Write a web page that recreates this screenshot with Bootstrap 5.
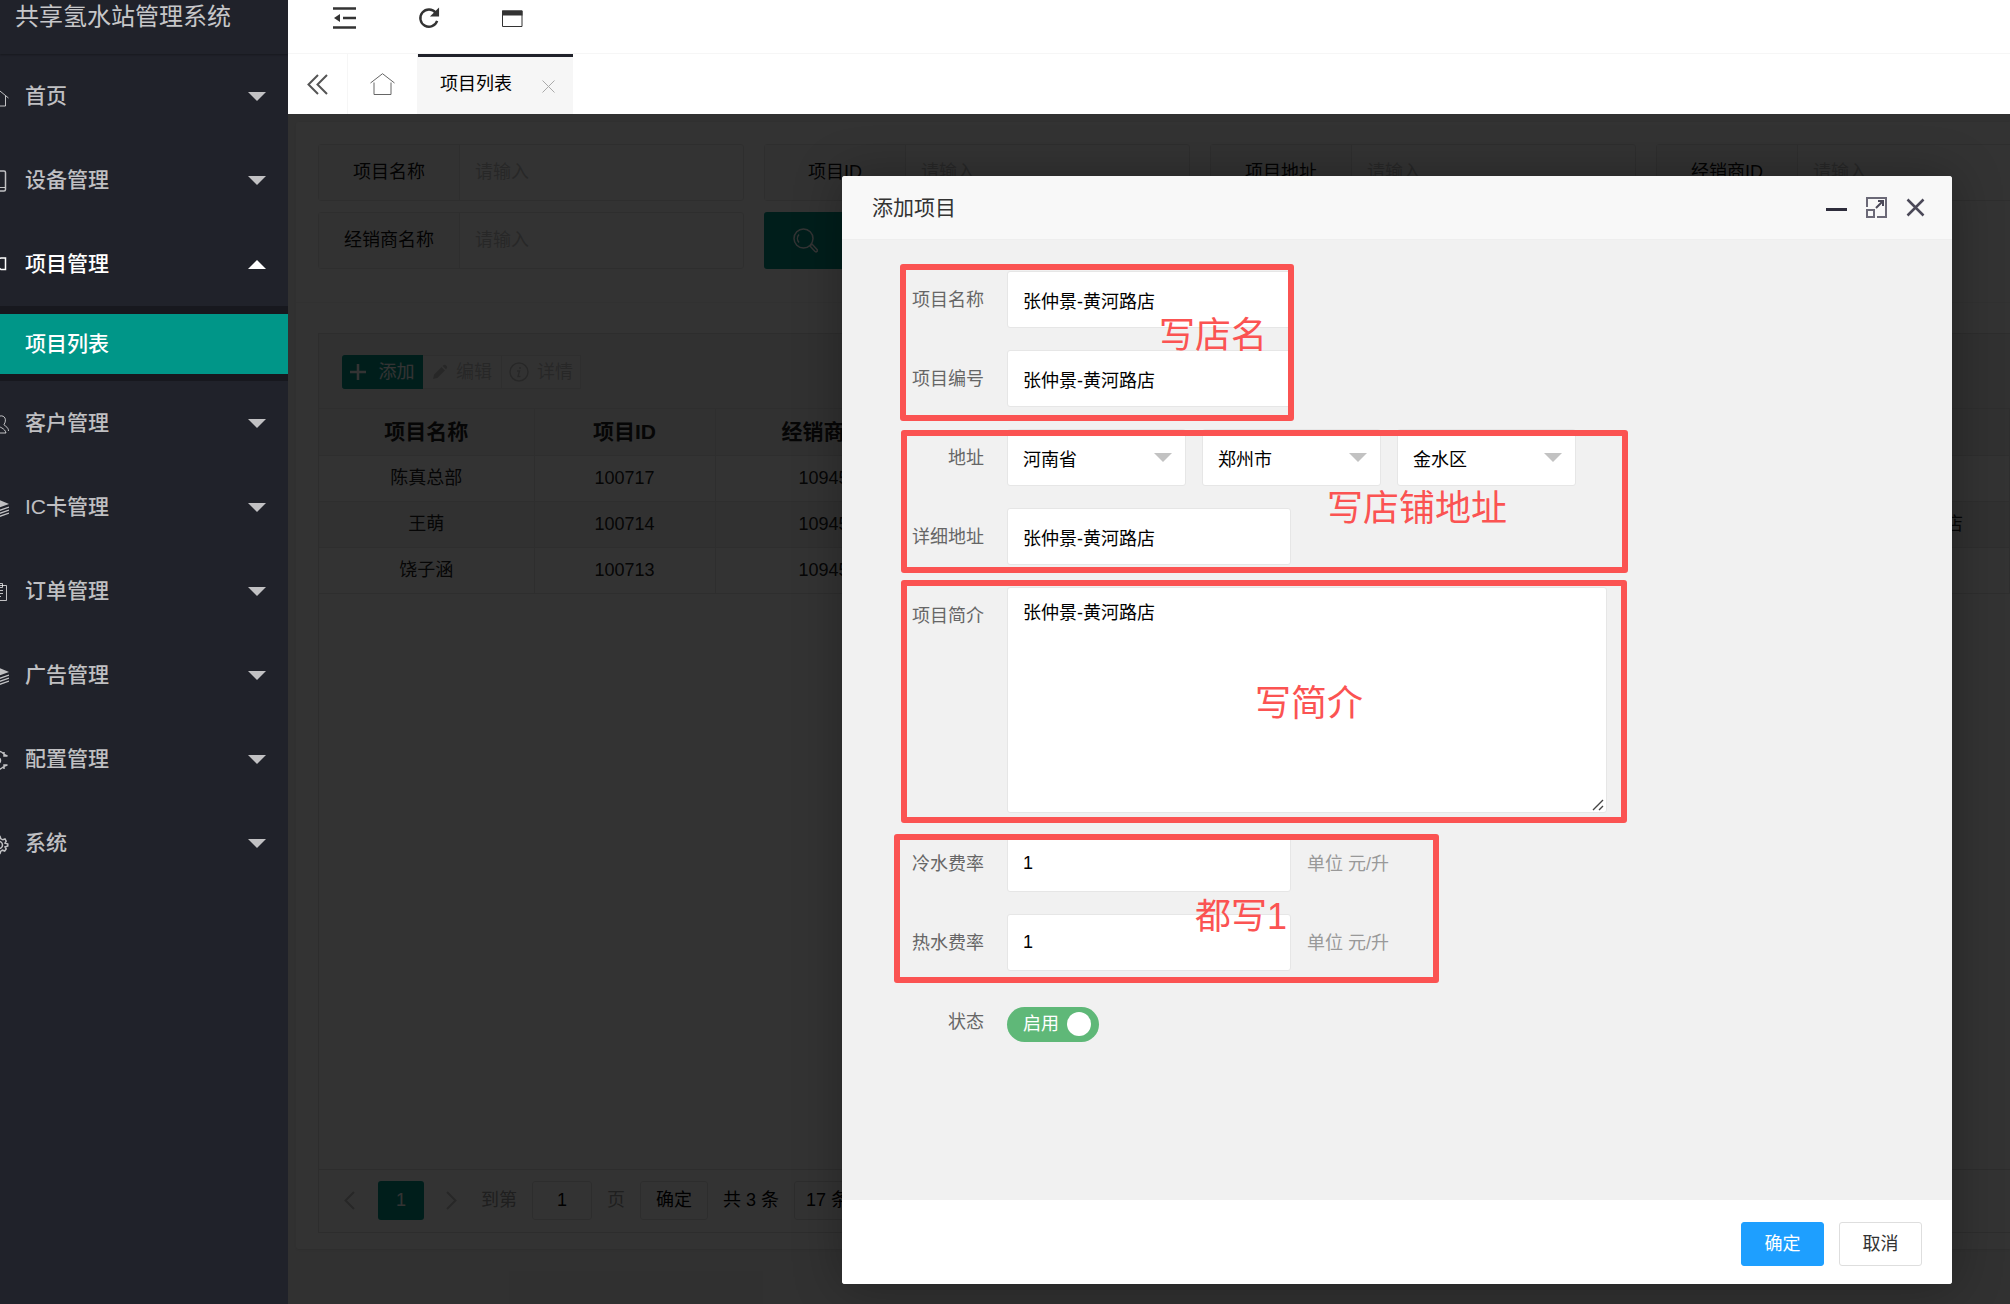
<!DOCTYPE html>
<html lang="zh-CN">
<head>
<meta charset="utf-8">
<meta name="viewport" content="width=device-width, initial-scale=1">
<title>共享氢水站管理系统</title>
<link href="https://cdn.jsdelivr.net/npm/bootstrap@5.3.0/dist/css/bootstrap.min.css" rel="stylesheet">
<style>
body{font-family:"Liberation Sans","Noto Sans CJK SC",sans-serif;font-size:18px;line-height:24px;color:#333;background:#f2f2f2}
button,input,select,textarea{font-family:inherit}
svg{display:block;flex:none}
.shell{height:100vh;min-height:1304px;overflow:hidden}
.content-col{min-width:0}
/* sidebar */
.side{width:288px;background:#20222a;overflow:hidden}
.side-logo{height:54px;padding:0 0 20px 15px;font-size:24px;color:rgba(255,255,255,.75);box-shadow:0 1px 2px rgba(0,0,0,.3)}
.side-link{height:84px;padding-right:22px;font-size:21px;font-weight:500;color:rgba(255,255,255,.72);text-decoration:none;gap:16px}
.side-link svg.ico{margin-left:-15px}
.side-link.on{color:#fff}
.side-link .arrow{margin-left:auto}
.side-sub{background:#17181e;padding:8px 0 7px}
.side-sub a{height:60px;padding-left:25px;background:#009688;color:#fff;font-size:21px;font-weight:500;text-decoration:none}
/* top bars */
.topbar{height:54px;padding:0 0 17px 45px;gap:62px;border-bottom:1px solid #f6f6f6;background:#fff}
.topbar button,.tabs-bar button,.win-tools button{border:0;background:none;padding:0;color:inherit}
.tabs-bar{height:60px;background:#fff}
.tabs-bar .cell{width:60px;border-right:1px solid #f6f6f6}
.tabs-bar .cell-lg{width:70px}
.tab-on{width:155px;background:#f6f6f6;border-top:3px solid #20222a;color:#000;padding:0 18px 3px 22px}
.tab-on a{color:#000;text-decoration:none}
.tab-on button{padding-top:4px}
/* page */
.page-area{padding:8px 0 55px 8px;background:#f2f2f2}
.panel{background:#fff;border-radius:3px 0 0 3px;box-shadow:0 1px 2px rgba(0,0,0,.08)}
.query{padding:22px 0 33px 22px;gap:11px;border-bottom:1px solid #f6f6f6}
.query-row{gap:20px}
.q-field{flex:0 0 426px;height:57px;border:1px solid #e6e6e6;border-radius:3px}
.q-field label{width:141px;padding-bottom:2px;border-right:1px solid #e6e6e6;background:#fbfbfb;color:#111}
.q-field input{min-width:0;border:0;background:none;padding:0 15px 2px}
.q-field input::placeholder{color:#c4c4c4}
.q-btn{width:83px;height:57px;border:0;border-radius:3px;background:#009688;color:#fff}
.grid-wrap{padding:30px 0 16px 22px}
.grid-box{border:1px solid #e2e2e2;border-right:0}
.grid-tools{height:75px;padding:21px 23px;background:#f2f2f2;border-bottom:1px solid #e6e6e6}
.grid-tools button{height:34px;font-size:18px;border:1px solid #e6e6e6;border-left:0;background:#fbfbfb;color:#c4c4c4;padding:0 6px;gap:8px;width:79px}
.grid-tools button.add{width:81px;background:#009688;border-color:#009688;color:#fff;border-radius:3px 0 0 3px;gap:13px}
.data-grid{table-layout:fixed;width:100%;border-collapse:collapse;color:#222}
.data-grid .c-name{width:215px}
.data-grid .c-id{width:181px}
.data-grid .c-agent{width:217px}
.data-grid th,.data-grid td{height:46px;border:0 solid #e6e6e6;border-width:0 1px 1px 0;text-align:center;padding:0}
.data-grid th{font-size:21px;background:#f2f2f2;color:#222}
.data-grid .even td{background:#f2f2f2}
.data-grid .far{text-align:right;padding-right:46px}
.pager{height:63px;border-top:1px solid #e2e2e2;padding:0 0 2px 25px;color:#000}
.pager button,.pager input,.pager select{height:39px;border:1px solid #e2e2e2;border-radius:3px;background:#fff;color:#000;padding:0;text-align:center}
.pager .nav-arrow{border:0;color:#c0c0c0;width:11px}
.pager .cur{width:46px;background:#009688;color:#fff;border:0;margin:0 22px 0 23px}
.pager .soft{color:#999}
.pager .jump{gap:15px;margin-left:24px}
.pager .jump input{width:60px}
.pager .jump button{width:68px}
.pager .jump select{width:120px;padding-left:7px;text-align:left}
/* dialog */
.shade{position:absolute;inset:0;background:rgba(0,0,0,.8);padding:62px 58px 20px 24px}
.dlg{position:relative;width:100%;max-width:1110px;background:#f1f1f1;border-radius:3px;box-shadow:1px 1px 50px rgba(0,0,0,.3)}
.dlg-head{height:64px;padding:0 27px 0 30px;font-size:21px;background:#f8f8f8;border-bottom:1px solid #eee;border-radius:3px 3px 0 0}
.win-tools{gap:19px;color:#2e2d3c}
.dlg-body{padding:31px 32px 0 32px;gap:22px}
.f-label{width:110px;margin-right:23px;text-align:right;color:#666;padding-top:17px;flex:none}
.f-row .box{height:57px;border:1px solid #e6e6e6;border-radius:3px;background-color:#fff;color:#000;font-size:18px;padding:2px 15px 0}
.f-row .w-in{width:284px;padding:0 15px}
.f-row select.box{width:179px;margin-right:16px;padding-top:4px;appearance:none;background-image:url("data:image/svg+xml,%3Csvg xmlns='http://www.w3.org/2000/svg' viewBox='0 0 18 9'%3E%3Cpath fill='%23c2c2c2' d='M0 0h18L9 9z'/%3E%3C/svg%3E");background-repeat:no-repeat;background-size:18px 9px;background-position:right 13px top 23px}
.f-row textarea.box{width:600px;height:226px;padding-top:13px;resize:both}
.f-row textarea::-webkit-resizer{background:url("data:image/svg+xml,%3Csvg xmlns='http://www.w3.org/2000/svg' viewBox='0 0 15 15'%3E%3Cpath fill='none' stroke='%23444' stroke-width='1.4' d='M2 13 12 3M8 13l4-4'/%3E%3C/svg%3E") no-repeat}
.f-hint{padding:17px 0 0 16px;color:#999}
.state{width:92px;height:35px;margin-top:14px;padding:0 8px 2px 16px;border-radius:18px;background:#5fb878;color:#fff}
.state input{appearance:none;width:24px;height:24px;border-radius:50%;background:#fff;margin:0}
.dlg-foot{height:84px;padding:4px 30px 0;gap:15px;background:#fff;border-radius:0 0 3px 3px}
.dlg-foot button{width:83px;height:44px;border:1px solid #dedede;border-radius:3px;background:#fff;color:#333;padding:0 0 1px}
.dlg-foot button.ok{background:#1e9fff;border-color:#1e9fff;color:#fff}
/* red notes laid over the form */
.note{position:absolute;border:6px solid #fb5352;border-radius:3px;pointer-events:none}
.note span{position:absolute;font-size:36px;line-height:40px;color:#fb5352;white-space:nowrap}
.note-a{left:58px;top:88px;width:394px;height:157px}
.note-a span{right:21px;top:46px}
.note-b{left:59px;top:254px;width:727px;height:143px}
.note-b span{right:115px;top:53px}
.note-c{left:59px;top:404px;width:726px;height:243px}
.note-c span{right:258px;top:98px}
.note-d{left:52px;top:658px;width:545px;height:149px}
.note-d span{right:146px;top:57px}
</style>
<script src="https://cdn.jsdelivr.net/npm/bootstrap@5.3.0/dist/js/bootstrap.bundle.min.js"></script>
</head>
<body>
<div class="shell d-flex">
  <nav class="side flex-shrink-0" aria-label="主菜单">
    <div class="side-logo d-flex align-items-center">共享氢水站管理系统</div>
    <a href="#" class="side-link d-flex align-items-center"><svg class="ico" width="24" height="24" viewBox="0 0 24 24" fill="none" stroke="currentColor"><path d="M3 14 12.500 5 23.500 14M6 12v10h14.500V12"/></svg>首页<svg class="arrow" width="18" height="9" viewBox="0 0 18 9"><path fill="currentColor" d="M0 0h18L9 9z"/></svg></a>
    <a href="#" class="side-link d-flex align-items-center"><svg class="ico" width="24" height="24" viewBox="0 0 24 24" fill="none" stroke="currentColor" stroke-width="1.500"><rect x="5" y="3" width="15.500" height="20" rx="1.500"/><path d="M5 19.500h15" stroke-width="1"/></svg>设备管理<svg class="arrow" width="18" height="9" viewBox="0 0 18 9"><path fill="currentColor" d="M0 0h18L9 9z"/></svg></a>
    <a href="#" class="side-link on d-flex align-items-center"><svg class="ico" width="24" height="24" viewBox="0 0 24 24" fill="none" stroke="currentColor" stroke-width="1.500"><path d="M4 4v18M4 7h9l3-1h4.500v11.500H16l-2-1.500H4"/></svg>项目管理<svg class="arrow" width="18" height="9" viewBox="0 0 18 9"><path fill="currentColor" d="M0 9h18L9 0z"/></svg></a>
    <div class="side-sub"><a href="#" class="d-flex align-items-center" aria-current="page">项目列表</a></div>
    <a href="#" class="side-link d-flex align-items-center"><svg class="ico" width="24" height="24" viewBox="0 0 24 24" fill="none" stroke="currentColor"><path d="M2 22c0-5 3-6 5-7.500C4 10 5 5 9.500 5S15 10 12 14.500c2 1.500 8 2.500 9 7.500zM15 5c5-1 7 4 4 8.500-.5 1 4.500 2 4.500 6.500"/></svg>客户管理<svg class="arrow" width="18" height="9" viewBox="0 0 18 9"><path fill="currentColor" d="M0 0h18L9 9z"/></svg></a>
    <a href="#" class="side-link d-flex align-items-center"><svg class="ico" width="24" height="24" viewBox="0 0 24 24" fill="none" stroke="currentColor" stroke-width="1.300"><path d="M3 8.500 12 4l12 5-11 4z" fill="currentColor" stroke="none"/><path d="m3 12 10 4 11-4M3 15l10 4 11-4M3 18l10 4 11-4"/></svg>IC卡管理<svg class="arrow" width="18" height="9" viewBox="0 0 18 9"><path fill="currentColor" d="M0 0h18L9 9z"/></svg></a>
    <a href="#" class="side-link d-flex align-items-center"><svg class="ico" width="24" height="24" viewBox="0 0 24 24" fill="none" stroke="currentColor"><path d="M5.500 6.500h16v15h-16zM9.500 4.500h8v4h-8zM8 11.500h10M8 14.500h10M8 17.500h8"/></svg>订单管理<svg class="arrow" width="18" height="9" viewBox="0 0 18 9"><path fill="currentColor" d="M0 0h18L9 9z"/></svg></a>
    <a href="#" class="side-link d-flex align-items-center"><svg class="ico" width="24" height="24" viewBox="0 0 24 24" fill="none" stroke="currentColor" stroke-width="1.300"><path d="M3 8.500 12 4l12 5-11 4z" fill="currentColor" stroke="none"/><path d="m3 12 10 4 11-4M3 15l10 4 11-4M3 18l10 4 11-4"/></svg>广告管理<svg class="arrow" width="18" height="9" viewBox="0 0 18 9"><path fill="currentColor" d="M0 0h18L9 9z"/></svg></a>
    <a href="#" class="side-link d-flex align-items-center"><svg class="ico" width="24" height="24" viewBox="0 0 24 24" fill="none" stroke="currentColor" stroke-width="1.500"><path d="M14 4.500c4 0 4 3 8.500 4.500M14 22.500c4-1 4-4 8.500-4.500M19 5v4h3.500M19 22v-4h3.500"/><circle cx="13" cy="13.500" r="2.500"/></svg>配置管理<svg class="arrow" width="18" height="9" viewBox="0 0 18 9"><path fill="currentColor" d="M0 0h18L9 9z"/></svg></a>
    <a href="#" class="side-link d-flex align-items-center"><svg class="ico" width="24" height="24" viewBox="0 0 24 24" fill="none" stroke="currentColor" stroke-width="1.500"><path d="m13 6 2-.5.8 2.300 2 1 2.200-.8 1.200 2.200-1.200 1.800 2.800 1v2l-2.800 1 1.200 2-1.500 2-2.300-.8-1.600 1-.8 2.300H13"/><circle cx="14" cy="14" r="3.500"/></svg>系统<svg class="arrow" width="18" height="9" viewBox="0 0 18 9"><path fill="currentColor" d="M0 0h18L9 9z"/></svg></a>
  </nav>

  <div class="content-col d-flex flex-column flex-fill">
    <header class="topbar d-flex align-items-center">
      <button type="button" aria-label="收起菜单"><svg width="23" height="22" viewBox="0 0 23 22" fill="none" stroke="#333" stroke-width="2.500"><path d="M0 1.500h23M10 11h13M0 20.500h23"/><path d="M1 11l6-4v8z" fill="#333" stroke="none"/></svg></button>
      <button type="button" aria-label="刷新"><svg width="22" height="24" viewBox="0 0 23 24" fill="none" stroke="#333" stroke-width="2.500"><path d="M18.500 6.500A9 9 0 1 0 20 15"/><path d="M22 1v9.500h-9.500z" fill="#333" stroke="none"/></svg></button>
      <button type="button" aria-label="窗口"><svg width="21" height="17" viewBox="0 0 21 17" fill="none" stroke="#333"><path d="M.5 1h19.500v15.500H.5z"/><path d="M0 3h20.500" stroke-width="5"/></svg></button>
    </header>
    <div class="tabs-bar d-flex">
      <div class="cell d-flex align-items-center justify-content-center"><button type="button" aria-label="向左"><svg width="21" height="21" viewBox="0 0 21 21" fill="none" stroke="#555" stroke-width="2"><path d="M11 1 1.500 10.500 11 20M20 1l-9.500 9.500L20 20"/></svg></button></div>
      <div class="cell cell-lg d-flex align-items-center justify-content-center"><button type="button" aria-label="主页"><svg width="25" height="22" viewBox="0 0 25 22" fill="none" stroke="#666"><path d="M.5 10 12.500.7 24.500 10M4 9.500v12h17v-12"/></svg></button></div>
      <div class="tab-on d-flex align-items-center justify-content-between"><a href="#">项目列表</a><button type="button" aria-label="关闭标签"><svg width="13" height="13" viewBox="0 0 13 13" stroke="#aaa"><path d="m.5.5 12 12M12.500.5l-12 12"/></svg></button></div>
    </div>

    <main class="position-relative flex-fill d-flex flex-column overflow-hidden">
      <div class="page-area flex-fill d-flex flex-column">
        <div class="panel flex-fill d-flex flex-column overflow-hidden">
          <form class="query d-flex flex-column">
            <div class="query-row d-flex">
              <div class="q-field d-flex"><label for="q1" class="d-flex align-items-center justify-content-center">项目名称</label><input id="q1" class="flex-fill" placeholder="请输入"></div>
              <div class="q-field d-flex"><label for="q2" class="d-flex align-items-center justify-content-center">项目ID</label><input id="q2" class="flex-fill" placeholder="请输入"></div>
              <div class="q-field d-flex"><label for="q3" class="d-flex align-items-center justify-content-center">项目地址</label><input id="q3" class="flex-fill" placeholder="请输入"></div>
              <div class="q-field d-flex"><label for="q4" class="d-flex align-items-center justify-content-center">经销商ID</label><input id="q4" class="flex-fill" placeholder="请输入"></div>
            </div>
            <div class="query-row d-flex">
              <div class="q-field d-flex"><label for="q5" class="d-flex align-items-center justify-content-center">经销商名称</label><input id="q5" class="flex-fill" placeholder="请输入"></div>
              <button type="button" class="q-btn d-flex align-items-center justify-content-center" aria-label="搜索"><svg width="25" height="25" viewBox="0 0 25 25" fill="none" stroke="currentColor" stroke-width="1.500"><circle cx="10.500" cy="10.500" r="9.500"/><path d="M6 14.500a6 6 0 0 1 0-8M17 18l2-2 5 5.500c1 1.500-.5 3-2 2z"/></svg></button>
            </div>
          </form>
          <div class="grid-wrap flex-fill d-flex flex-column">
            <div class="grid-box flex-fill d-flex flex-column">
              <div class="grid-tools d-flex">
                <button type="button" class="add d-flex align-items-center justify-content-center"><svg width="16" height="16" viewBox="0 0 16 16" stroke="currentColor" stroke-width="2.500"><path d="M8 0v16M0 8h16"/></svg>添加</button>
                <button type="button" class="d-flex align-items-center justify-content-center"><svg width="16" height="16" viewBox="0 0 16 16" fill="currentColor"><path d="m1 15 1-4.500 7.500-7.500 3.500 3.500L5.500 14zM10.500 2 12 .8c1.500-.8 4 1.700 3 3.200L14 5.500z"/></svg>编辑</button>
                <button type="button" class="d-flex align-items-center justify-content-center"><svg width="20" height="20" viewBox="0 0 20 20" fill="none" stroke="currentColor" stroke-width="1.500"><circle cx="10" cy="10" r="9"/><path d="M8 9h2.500L9 14.500h2.500M11 5v2"/></svg>详情</button>
              </div>
              <table class="data-grid">
                <colgroup><col class="c-name"><col class="c-id"><col class="c-agent"><col></colgroup>
                <thead><tr><th>项目名称</th><th>项目ID</th><th>经销商ID</th><th></th></tr></thead>
                <tbody>
                  <tr><td>陈真总部</td><td>100717</td><td>10945</td><td></td></tr>
                  <tr class="even"><td>王萌</td><td>100714</td><td>10945</td><td class="far">店</td></tr>
                  <tr><td>饶子涵</td><td>100713</td><td>10945</td><td></td></tr>
                </tbody>
              </table>
              <div class="pager mt-auto d-flex align-items-center">
                <button type="button" class="nav-arrow" aria-label="上一页"><svg width="11" height="19" viewBox="0 0 11 19" fill="none" stroke="currentColor" stroke-width="2"><path d="M10 1 1.500 9.500 10 18"/></svg></button>
                <button type="button" class="cur">1</button>
                <button type="button" class="nav-arrow" aria-label="下一页"><svg width="11" height="19" viewBox="0 0 11 19" fill="none" stroke="currentColor" stroke-width="2"><path d="m1 1 8.500 8.500L1 18"/></svg></button>
                <div class="jump d-flex align-items-center">
                  <label for="pg" class="soft">到第</label><input id="pg" value="1">
                  <span class="soft">页</span><button type="button">确定</button>
                  <span>共 3 条</span>
                  <select aria-label="每页条数"><option>17 条/页</option></select>
                </div>
              </div>
            </div>
          </div>
        </div>
      </div>

      <div class="shade d-flex justify-content-end">
        <section class="dlg d-flex flex-column" role="dialog" aria-labelledby="dlgTitle">
          <header class="dlg-head d-flex align-items-center justify-content-between">
            <span id="dlgTitle">添加项目</span>
            <div class="win-tools d-flex align-items-center">
              <button type="button" aria-label="最小化"><svg width="21" height="21" viewBox="0 0 21 21"><path fill="currentColor" d="M0 11h21v3H0z"/></svg></button>
              <button type="button" aria-label="最大化"><svg width="21" height="21" viewBox="0 0 21 21" fill="none" stroke="#6b6977" stroke-width="2"><path d="M1 10V1h19v19h-9M1 13h7v7H1z"/><path d="m10 11 7-7M12 4h5v5" stroke="#4b4958"/></svg></button>
              <button type="button" aria-label="关闭"><svg width="19" height="19" viewBox="0 0 19 19" stroke="#4b4958" stroke-width="2.500"><path d="m1.500 1.500 16 16M17.500 1.500l-16 16"/></svg></button>
            </div>
          </header>
          <form class="dlg-body flex-fill d-flex flex-column">
            <div class="f-row d-flex"><label class="f-label" for="f1">项目名称</label><input id="f1" class="box w-in" value="张仲景-黄河路店"></div>
            <div class="f-row d-flex"><label class="f-label" for="f2">项目编号</label><input id="f2" class="box w-in" value="张仲景-黄河路店"></div>
            <div class="f-row d-flex"><label class="f-label" for="f3">地址</label>
              <select id="f3" class="box"><option>河南省</option></select>
              <select class="box" aria-label="城市"><option>郑州市</option></select>
              <select class="box" aria-label="区县"><option>金水区</option></select></div>
            <div class="f-row d-flex"><label class="f-label" for="f4">详细地址</label><input id="f4" class="box w-in" value="张仲景-黄河路店"></div>
            <div class="f-row d-flex"><label class="f-label" for="f5">项目简介</label><textarea id="f5" class="box">张仲景-黄河路店</textarea></div>
            <div class="f-row d-flex"><label class="f-label" for="f6">冷水费率</label><input id="f6" class="box w-in" value="1"><span class="f-hint">单位 元/升</span></div>
            <div class="f-row d-flex"><label class="f-label" for="f7">热水费率</label><input id="f7" class="box w-in" value="1"><span class="f-hint">单位 元/升</span></div>
            <div class="f-row d-flex"><label class="f-label" for="f8">状态</label><label class="state d-flex align-items-center justify-content-between">启用<input id="f8" type="checkbox" role="switch" checked></label></div>
          </form>
          <footer class="dlg-foot d-flex align-items-center justify-content-end">
            <button type="button" class="ok">确定</button>
            <button type="button">取消</button>
          </footer>
          <div class="note note-a"><span>写店名</span></div>
          <div class="note note-b"><span>写店铺地址</span></div>
          <div class="note note-c"><span>写简介</span></div>
          <div class="note note-d"><span>都写1</span></div>
        </section>
      </div>
    </main>
  </div>
</div>
</body>
</html>
